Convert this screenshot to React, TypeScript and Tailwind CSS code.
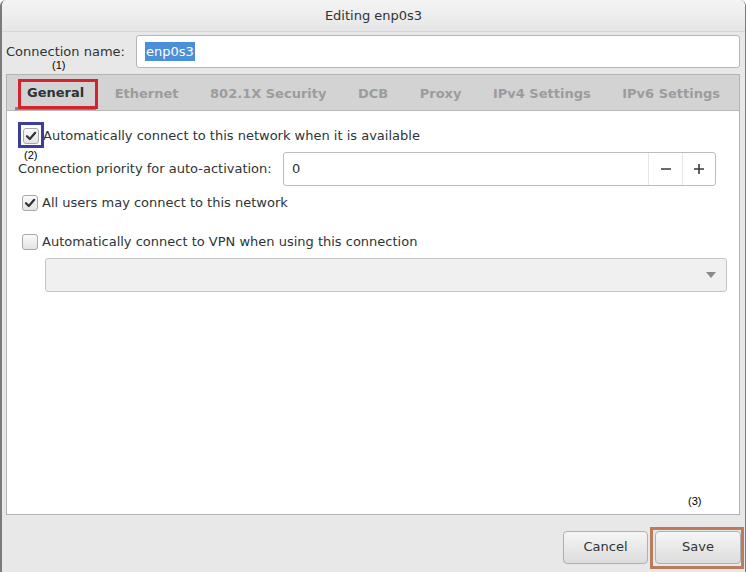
import React from 'react';

const font = { fontFamily: '"DejaVu Sans", "Liberation Sans", sans-serif' };
const noteFont = { fontFamily: '"Liberation Sans", sans-serif' };

function Check({ checked }: { checked?: boolean }) {
  return (
    <span className="w-[16px] h-[16px] shrink-0 rounded-[3px] border border-[#a8a8a8] bg-gradient-to-b from-[#fafafa] to-[#e4e4e4] flex items-center justify-center">
      {checked && (
        <svg width="12" height="12" viewBox="0 0 12 12">
          <path d="M2 6.2 L4.8 9 L10.2 2.8" fill="none" stroke="#2e3436" strokeWidth="2.2" strokeLinecap="round" strokeLinejoin="round" />
        </svg>
      )}
    </span>
  );
}

const tabs = ['General', 'Ethernet', '802.1X Security', 'DCB', 'Proxy', 'IPv4 Settings', 'IPv6 Settings'];

export default function App() {
  return (
    <div className="w-[748px] h-[572px] bg-white overflow-hidden text-[13px] text-[#2e3436] relative" style={font}>
      <div className="w-[746px] h-full flex flex-col bg-[#e8e8e8] border-l-2 border-r border-[#7a7a7a] rounded-t-[6px] overflow-hidden relative">
        {/* title bar */}
        <div className="h-[32px] shrink-0 flex items-center justify-center bg-gradient-to-b from-[#f4f4f4] to-[#e6e6e6] border-b border-[#d6d6d6] text-[#2e3436]">
          Editing enp0s3
        </div>

        {/* connection name */}
        <div className="flex items-center pl-[4px] pr-[5px] mt-[3px] h-[33px] shrink-0">
          <span className="w-[130px] shrink-0">Connection name:</span>
          <div className="flex-1 h-full bg-white border border-[#b6b6b6] rounded-[3px] flex items-center px-[8px]">
            <span className="bg-[#4a90d9] text-white px-[1px]">enp0s3</span>
          </div>
        </div>

        {/* notebook */}
        <div className="mx-[4px] mr-[5px] mt-[6px] flex-1 flex flex-col border border-[#b3b3b3]">
          <div className="h-[36px] shrink-0 bg-[#d3d3d3] flex items-stretch pl-[8px] gap-[5.5px] border-b border-[#b8b8b8]">
            {tabs.map((t, i) => (
              <div
                key={t}
                className={
                  i === 0
                    ? 'px-[12px] flex items-center font-bold text-[#2e3436] border-b-[3px] border-[#5c8fc4] pt-[4px]'
                    : 'px-[13px] flex items-center font-bold text-[#9c9c9c] pt-[2px]'
                }
              >
                {t}
              </div>
            ))}
          </div>
          <div className="flex-1 bg-white flex flex-col pl-[16px] pr-[12px]">
            <div className="flex items-center gap-[4px] mt-[16px] h-[18px]">
              <Check checked />
              <span>Automatically connect to this network when it is available</span>
            </div>
            <div className="flex items-center mt-[7px] h-[34px] -ml-[5px] mr-[11px]">
              <span className="w-[265px] shrink-0">Connection priority for auto-activation:</span>
              <div className="flex-1 h-full bg-white border border-[#bcbcbc] rounded-[3px] flex items-stretch">
                <div className="flex-1 flex items-center px-[8px]">0</div>
                <div className="w-[34px] border-l border-[#e6e6e6] flex items-center justify-center">
                  <svg width="12" height="12" viewBox="0 0 12 12"><path d="M1 6 H11" stroke="#3a3a3a" strokeWidth="1.6" /></svg>
                </div>
                <div className="w-[33px] border-l border-[#e6e6e6] flex items-center justify-center">
                  <svg width="12" height="12" viewBox="0 0 12 12"><path d="M1 6 H11 M6 1 V11" stroke="#3a3a3a" strokeWidth="1.6" /></svg>
                </div>
              </div>
            </div>
            <div className="flex items-center gap-[4px] mt-[8px] h-[18px] -ml-[1px]">
              <Check checked />
              <span>All users may connect to this network</span>
            </div>
            <div className="flex items-center gap-[4px] mt-[21px] h-[18px] -ml-[1px]">
              <Check />
              <span>Automatically connect to VPN when using this connection</span>
            </div>
            <div className="ml-[22px] mt-[7px] h-[34px] bg-[#f0f0f0] border border-[#c6c6c6] rounded-[3px] flex items-center justify-end pr-[10px]">
              <svg width="10" height="6" viewBox="0 0 10 6"><path d="M0 0 H10 L5 6 Z" fill="#8a8a8a" /></svg>
            </div>
          </div>
        </div>

        {/* footer */}
        <div className="h-[57px] shrink-0 flex items-center justify-end gap-[7px] pr-[4px] pt-[7px]">
          <button className="w-[85px] h-[33px] rounded-[4px] border border-[#b0b0b0] bg-gradient-to-b from-[#f6f6f6] to-[#dcdcdc] text-[#2e3436]">Cancel</button>
          <button className="w-[86px] h-[33px] rounded-[4px] border border-[#b0b0b0] bg-gradient-to-b from-[#f6f6f6] to-[#dcdcdc] text-[#2e3436]">Save</button>
        </div>

        {/* annotations */}
        <div className="absolute left-[16px] top-[79px] w-[80px] h-[30px] border-[3px] border-[#d2232e] pointer-events-none" />
        <div className="absolute left-[50px] top-[57px] text-[11px] text-black" style={noteFont}>(1)</div>
        <div className="absolute left-[16px] top-[122px] w-[26px] h-[26px] border-[3px] border-[#3b3f9a] pointer-events-none" />
        <div className="absolute left-[22px] top-[150px] text-[11px] text-black leading-none" style={noteFont}>(2)</div>
        <div className="absolute left-[686px] top-[496px] text-[11px] text-black leading-none" style={noteFont}>(3)</div>
        <div className="absolute left-[648px] top-[527px] w-[94px] h-[42px] border-[3px] border-[#b97d5e] pointer-events-none" />
      </div>
    </div>
  );
}
